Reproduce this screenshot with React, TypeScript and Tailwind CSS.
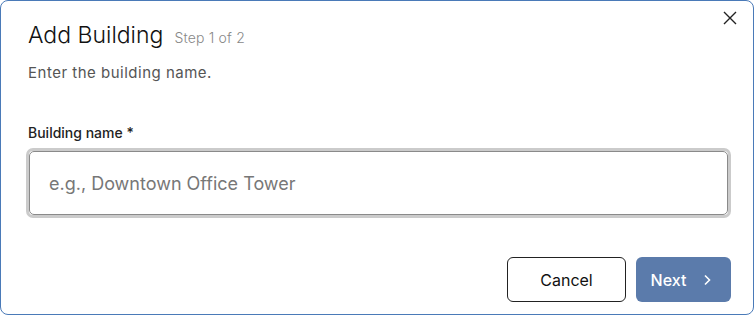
import React from "react";

export default function App() {
  return (
    <div className="w-[754px] h-[315px] bg-white" style={{ fontFamily: "Inter, 'Noto Sans', sans-serif" }}>
      <div className="relative w-full h-full rounded-lg border border-[#4a7ab8] bg-white">
        <button className="absolute right-[16px] top-[10px] text-[#222]" aria-label="Close">
          <svg width="14" height="14" viewBox="0 0 14 14" fill="none" stroke="currentColor" strokeWidth="1.4">
            <path d="M1 1L13 13M13 1L1 13" />
          </svg>
        </button>
        <div className="pl-[27px] pr-[22px] pt-[19px]">
          <div className="flex items-baseline gap-[11px]">
            <h2 className="text-[23px] font-light text-[#111] leading-[30px]">Add Building</h2>
            <span className="text-[14px] font-light text-[#888] tracking-[0.2px]">Step 1 of 2</span>
          </div>
          <p className="mt-[13px] text-[15px] text-[#555] leading-[20px] tracking-[0.5px]">Enter the building name.</p>
          <label className="block mt-[40px] text-[14px] font-medium text-[#222] leading-[20px]">
            Building name *
          </label>
          <div className="mt-[5px] -ml-[2px] rounded-[7px] border-[3px] border-[#cbcbcb]">
            <input
              className="block w-full h-[64px] rounded-[5px] border border-[#8a8a8a] px-[19px] text-[18px] text-[#333] placeholder:text-[#777] outline-none"
              placeholder="e.g., Downtown Office Tower"
            />
          </div>
          <div className="flex justify-end gap-[10px] mt-[39px]">
            <button className="w-[119px] h-[45px] rounded-[6px] border border-[#222] text-[16px] text-[#111]">
              Cancel
            </button>
            <button className="w-[95px] h-[45px] rounded-[6px] bg-[#5b7bab] text-white text-[16px] font-medium flex items-center justify-center gap-[16px] pr-[4px]">
              Next
              <svg width="10" height="12" viewBox="0 0 10 12" fill="none" stroke="currentColor" strokeWidth="1.6">
                <path d="M3 1.5L7.5 6L3 10.5" />
              </svg>
            </button>
          </div>
        </div>
      </div>
    </div>
  );
}
